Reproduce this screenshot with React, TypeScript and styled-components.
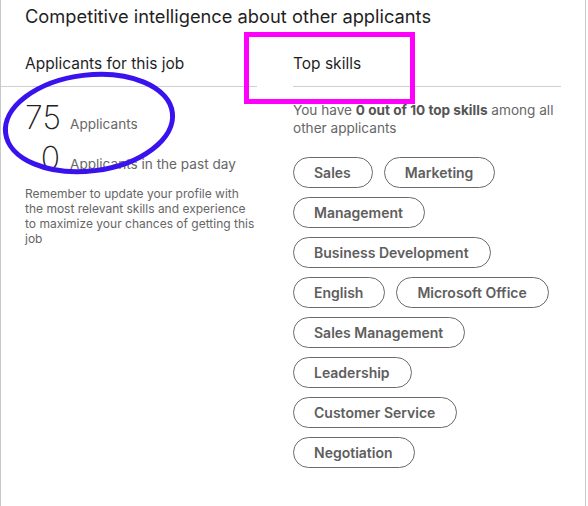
import styled, { createGlobalStyle } from "styled-components";

const GlobalStyle = createGlobalStyle`
  body {
    margin: 0;
    background: #fff;
    font-family: Inter, "Liberation Sans", Arial, sans-serif;
    -webkit-font-smoothing: antialiased;
  }
`;

const Card = styled.section`
  position: relative;
  width: 586px;
  min-height: 506px;
  box-sizing: border-box;
  border-left: 1px solid #c8c8c8;
  border-right: 1px solid #c8c8c8;
  padding: 4px 24px 0 24px;
  background: #fff;
`;

const Title = styled.h1`
  margin: 0;
  font-size: 18.3px;
  line-height: 24px;
  font-weight: 400;
  color: #1f1f1f;
`;

const Columns = styled.div`
  display: grid;
  grid-template-columns: 232px 268px;
  column-gap: 36px;
  margin-top: 24px;
`;

const ColumnHeading = styled.h2<{ $bleed?: boolean }>`
  margin: 0 0 0 ${(p) => (p.$bleed ? "-24px" : "0")};
  padding: 0 0 10px ${(p) => (p.$bleed ? "24px" : "0")};
  font-size: 15.5px;
  line-height: 24px;
  font-weight: 400;
  color: #1f1f1f;
  border-bottom: 1px solid #cfcfcf;
`;

const Stats = styled.div`
  margin-top: 11px;
`;

const StatRow = styled.div`
  display: flex;
  align-items: baseline;
  gap: 10px;
  height: 40px;
  line-height: 40px;
`;

const StatNumber = styled.span`
  width: 35px;
  text-align: right;
  font-size: 32px;
  font-weight: 200;
  color: #222;
`;

const StatLabel = styled.span`
  font-size: 13.6px;
  color: #666;
`;

const Note = styled.p`
  margin: 8px 0 0;
  font-size: 12px;
  line-height: 15px;
  color: #666;
`;

const Summary = styled.p`
  margin: 14px 0 0;
  font-size: 13.6px;
  line-height: 18px;
  color: #666;

  b {
    font-weight: 700;
    color: #555;
  }
`;

const Pills = styled.ul`
  list-style: none;
  margin: 20px 0 0;
  padding: 0;
  display: flex;
  flex-wrap: wrap;
  gap: 9px 11px;
`;

const Pill = styled.li`
  height: 31px;
  box-sizing: border-box;
  padding: 0 21px 0 20px;
  border: 1px solid #6a6a6a;
  border-radius: 16px;
  font-size: 14px;
  line-height: 29px;
  font-weight: 600;
  color: #5e5e5e;
  white-space: nowrap;
`;

const Markup = styled.svg`
  position: absolute;
  left: 0;
  top: 0;
  width: 586px;
  height: 506px;
  pointer-events: none;
`;

const skills = [
  "Sales",
  "Marketing",
  "Management",
  "Business Development",
  "English",
  "Microsoft Office",
  "Sales Management",
  "Leadership",
  "Customer Service",
  "Negotiation",
];

export default function App() {
  return (
    <>
      <GlobalStyle />
      <Card>
        <Title>Competitive intelligence about other applicants</Title>
        <Columns>
          <div>
            <ColumnHeading $bleed>Applicants for this job</ColumnHeading>
            <Stats>
              <StatRow>
                <StatNumber>75</StatNumber>
                <StatLabel>Applicants</StatLabel>
              </StatRow>
              <StatRow>
                <StatNumber>0</StatNumber>
                <StatLabel>Applicants in the past day</StatLabel>
              </StatRow>
            </Stats>
            <Note>
              Remember to update your profile with the most relevant skills and
              experience to maximize your chances of getting this job
            </Note>
          </div>
          <div>
            <ColumnHeading>Top skills</ColumnHeading>
            <Summary>
              You have <b>0 out of 10 top skills</b> among all other applicants
            </Summary>
            <Pills>
              {skills.map((s) => (
                <Pill key={s}>{s}</Pill>
              ))}
            </Pills>
          </div>
        </Columns>

        {/* hand-drawn annotations on top of the card */}
        <Markup viewBox="0 0 586 506">
          <ellipse
            cx="88"
            cy="123"
            rx="84"
            ry="48"
            transform="rotate(-7 88 123)"
            fill="none"
            stroke="#3a12ee"
            strokeWidth="5"
          />
          <rect
            x="245.5"
            y="34.5"
            width="166"
            height="67"
            fill="none"
            stroke="#ff00ff"
            strokeWidth="5"
          />
        </Markup>
      </Card>
    </>
  );
}
